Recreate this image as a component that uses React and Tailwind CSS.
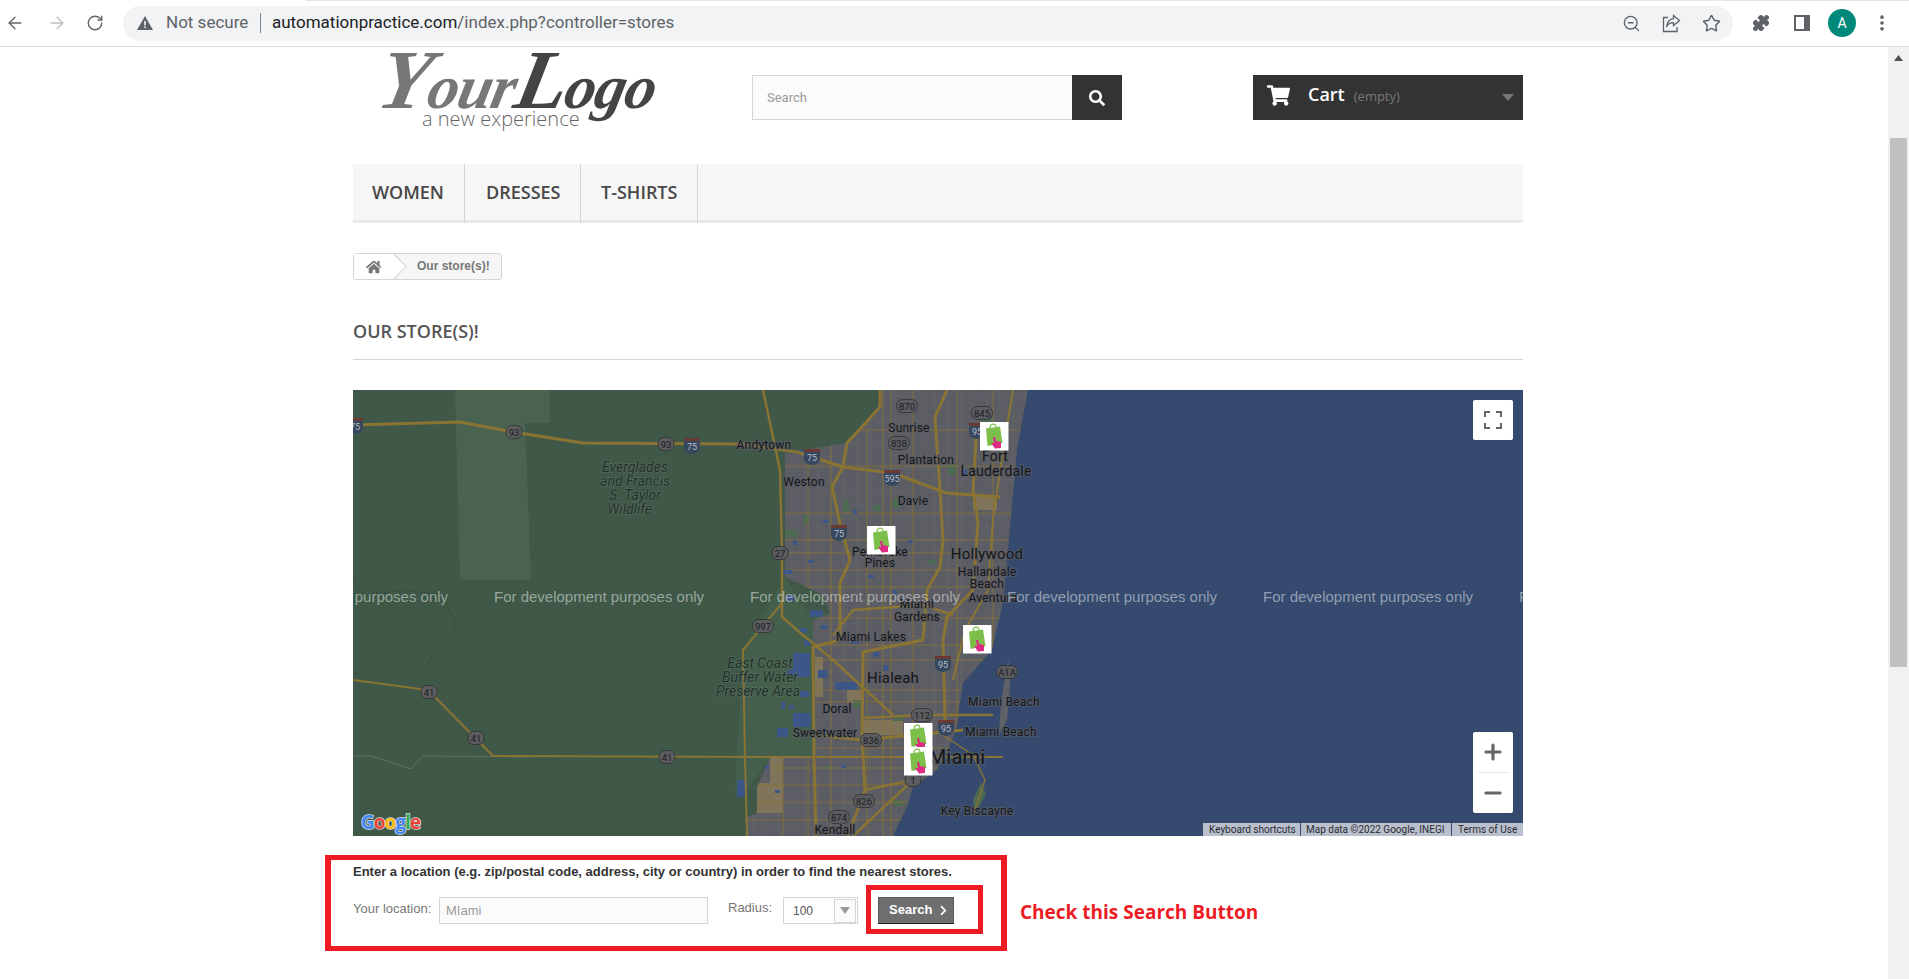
import { ArrowLeft, ArrowRight, RotateCw, ZoomOut, Star, Puzzle, EllipsisVertical, Plus, Minus } from "lucide-react";
import { FaHome, FaSearch, FaShoppingCart, FaChevronRight } from "react-icons/fa";

const GOLD = "#8a7433";

// map data, all in map pixels (1170 x 446)
const majorRoads = [
  ["0,35 107,32 160,42 230,53 387,54 444,62 490,77 540,83 593,103 647,107", 3],
  ["410,0 427,80 429,163 429,227 444,240 480,270 540,325", 2.4],
  ["429,213 390,260 392,367 394,446", 2],
  ["0,290 75,300 140,366 444,367 650,367", 2],
  ["527,0 527,17 494,53 490,77 479,97 487,133 497,170 487,193 487,250 460,257 461,367 463,446", 3],
  ["594,0 582,27 587,100 590,150 587,177 574,200 570,250 510,262 509,345 512,400 495,446", 3],
  ["624,33 620,100 625,133 620,200 594,227 590,250 592,327 590,345", 3],
  ["660,0 650,60 640,130 635,200 612,240 600,290", 2],
  ["460,345 510,350 560,345 610,340", 3],
  ["510,328 570,325 640,325", 2.4],
  ["590,345 620,365 632,390 620,425", 1.4],
  ["512,400 560,390 500,446", 2.4],
  ["480,245 500,220 570,215 600,225", 2.4],
];

const urban = "527,0 527,17 514,33 494,53 432,63 432,187 470,205 477,223 460,230 460,367 417,367 404,397 404,423 394,427 394,446 540,446 554,417 560,397 584,380 594,363 604,337 607,313 610,293 639,260 655,213 664,60 675,0";
const coast = "675,0 664,60 655,160 650,213 639,260 610,293 607,313 604,337 594,363 584,380 560,397 554,417 540,446 1170,446 1170,0";

const lakes = [
  [440, 263, 17, 24], [440, 323, 17, 14], [424, 338, 11, 9], [457, 220, 13, 7], [384, 390, 10, 17],
  [465, 280, 9, 8], [482, 292, 22, 8], [434, 280, 8, 6], [430, 180, 9, 4], [433, 205, 8, 6],
  [447, 301, 9, 6], [498, 250, 8, 4], [520, 262, 6, 5], [470, 130, 5, 3], [500, 120, 4, 4],
  [610, 80, 4, 5], [446, 60, 7, 3], [555, 150, 5, 3], [515, 185, 6, 3], [540, 200, 4, 4],
  [446, 238, 8, 5], [451, 250, 6, 6], [428, 312, 4, 7], [436, 315, 5, 4], [412, 376, 4, 3], [422, 400, 5, 3],
  [468, 235, 6, 4], [480, 240, 7, 4], [530, 275, 5, 6], [440, 150, 4, 5], [455, 170, 6, 3], [488, 375, 5, 3],
];
const tanPatches = [
  [462, 267, 8, 40], [494, 300, 15, 13], [510, 330, 40, 15], [417, 368, 13, 55], [404, 393, 13, 30], [620, 107, 24, 13],
];
const greenPatches = [
  [490, 110, 6, 12], [520, 115, 8, 6], [540, 108, 8, 10], [595, 75, 8, 9], [630, 25, 8, 7], [500, 310, 10, 8],
  [540, 325, 10, 6], [470, 376, 8, 3], [540, 410, 10, 6], [432, 140, 12, 8], [450, 125, 6, 9], [575, 170, 7, 4],
];

const labels = [
  ["Andytown", 411, 59, 12], ["Sunrise", 556, 42, 12], ["Plantation", 573, 74, 12], ["Weston", 451, 96, 12],
  ["Davie", 560, 115, 12], ["Pembroke", 527, 166, 12], ["Pines", 527, 177, 12], ["Hallandale", 634, 186, 12],
  ["Beach", 634, 198, 12], ["Aventura", 640, 212, 12], ["Miami", 564, 218, 12], ["Gardens", 564, 231, 12],
  ["Miami Lakes", 518, 251, 12], ["Doral", 484, 323, 12], ["Sweetwater", 472, 347, 12], ["Miami Beach", 651, 316, 12],
  ["Miami Beach", 648, 346, 12], ["Key Biscayne", 624, 425, 12], ["Kendall", 482, 444, 12],
  ["Fort", 642, 71, 14], ["Lauderdale", 643, 86, 14], ["Hollywood", 634, 169, 15], ["Hialeah", 540, 293, 15], ["Miami", 604, 374, 20],
];
const parkLabels = [
  ["Everglades", 282, 82], ["and Francis", 282, 96], ["S. Taylor", 282, 110], ["Wildlife...", 282, 124],
  ["East Coast", 407, 278], ["Buffer Water", 407, 292], ["Preserve Area", 405, 306],
];
const shields = [
  ["93", 161, 42], ["93", 313, 54], ["27", 427, 163], ["997", 410, 236], ["41", 76, 302], ["41", 123, 348], ["41", 314, 367],
  ["870", 554, 16], ["845", 629, 23], ["838", 546, 53], ["A1A", 654, 282], ["112", 569, 325], ["836", 518, 350],
  ["1", 560, 390], ["826", 511, 411], ["874", 486, 427],
];
const interstates = [["75", 2, 35], ["75", 339, 55], ["95", 624, 40], ["75", 459, 66], ["595", 539, 87], ["75", 486, 142], ["95", 590, 273], ["95", 593, 337]];
const markers = [[627, 32], [514, 136], [610, 235], [551, 333], [551, 357]];
const watermarks = [-115, 141, 397, 654, 910, 1166];

function Marker({ x, y }) {
  return (
    <g transform={`translate(${x} ${y})`}>
      <rect width="28.5" height="28.5" fill="#fff" />
      <path d="M6 6.5 L20 4.5 L22.5 21 L7.5 24 Z" fill="#7cc04b" />
      <path d="M10 6 C10 1 16 1 16 5" fill="none" stroke="#7cc04b" strokeWidth="1.2" />
      <path d="M13 15 L15 15 L16 19 L21 20 L21 26 L15 26.5 L11 21 L14 21 Z" fill="#dd2a82" />
    </g>
  );
}

function StoreMap() {
  const verticals = [];
  const horizontals = [];
  for (let x = 400; x < 680; x += 13) verticals.push(x);
  for (let y = 6; y < 446; y += 12) horizontals.push(y);
  const goldV = [455, 514, 538, 560, 604, 640, 430, 478, 530];
  const goldH = [40, 76, 123, 150, 163, 180, 197, 228, 255, 270, 300, 312, 358, 378, 395, 412, 430];

  return (
    <svg viewBox="0 0 1170 446" width="1170" height="446" className="block bg-[#405847]">
      <defs>
        <clipPath id="urban-clip"><polygon points={urban} /></clipPath>
      </defs>
      <polygon points="102,0 197,0 197,33 172,33 178,190 107,190" fill="#4a6351" />
      <polygon points="390,260 432,187 460,230 460,367 417,367 394,400 382,400" fill="#44604c" />
      <polygon points={urban} fill="#5c5d64" />
      <g clipPath="url(#urban-clip)">
        {verticals.map((x) => <line key={x} x1={x} y1="0" x2={x} y2="446" stroke="#66686d" strokeWidth="0.6" />)}
        {horizontals.map((y) => <line key={y} x1="390" y1={y} x2="680" y2={y} stroke="#66686d" strokeWidth="0.6" />)}
        {tanPatches.map(([x, y, w, h]) => <rect key={`${x}-${y}`} x={x} y={y} width={w} height={h} fill="#80745a" />)}
        {greenPatches.map(([x, y, w, h]) => <rect key={`${x}-${y}`} x={x} y={y} width={w} height={h} fill="#4d6a53" />)}
        {goldV.map((x) => <line key={x} x1={x} y1="0" x2={x} y2="446" stroke={GOLD} strokeWidth="1" strokeOpacity="0.8" />)}
        {goldH.map((y) => <line key={y} x1="390" y1={y} x2="680" y2={y} stroke={GOLD} strokeWidth="1" strokeOpacity="0.8" />)}
      </g>
      {lakes.map(([x, y, w, h]) => <rect key={`${x}-${y}`} x={x} y={y} width={w} height={h} fill="#3c5689" />)}
      <polygon points={coast} fill="#354a6e" />
      <polygon points="655,270 658,285 654,330 646,345 648,312" fill="#5f6168" />
      <polygon points="628,392 633,404 622,425 620,410" fill="#4d6a53" />

      {/* faint trail bits in the everglades */}
      <path d="M0 188 L12 205 L50 200 L90 205 L104 238 L80 265 L72 280" fill="none" stroke="#2e3f33" strokeWidth="0.8" strokeDasharray="2 2" />
      <path d="M0 366 L18 366 L58 379 L70 366 L180 367" fill="none" stroke="#6b7a6f" strokeWidth="0.8" />

      {majorRoads.map(([points, w]) => (
        <polyline key={points} points={points} fill="none" stroke={GOLD} strokeWidth={w} strokeLinejoin="round" />
      ))}

      {shields.map(([t, x, y]) => {
        const w = t.length > 2 ? 21 : 16;
        return (
          <g key={`${t}-${x}`}>
            <rect x={x - w / 2} y={y - 6.5} width={w} height="13" rx="6" fill="#5b5c60" stroke="#2a2a2c" strokeWidth="0.7" />
            <text x={x} y={y + 3.5} textAnchor="middle" fontSize="9.5" fontFamily="Roboto, sans-serif" fill="#1b1b1d">{t}</text>
          </g>
        );
      })}
      {interstates.map(([t, x, y]) => (
        <g key={`${t}-${x}`}>
          <path d={`M${x - 8} ${y - 6} H${x + 8} V${y + 2} Q${x + 8} ${y + 8} ${x} ${y + 9} Q${x - 8} ${y + 8} ${x - 8} ${y + 2} Z`} fill="#36485f" />
          <rect x={x - 8} y={y - 7} width="16" height="3" fill="#6a3a32" />
          <text x={x} y={y + 5} textAnchor="middle" fontSize="9" fontFamily="Roboto, sans-serif" fill="#b9bdc4">{t}</text>
        </g>
      ))}

      <g fontFamily="Roboto, sans-serif" textAnchor="middle">
        {labels.map(([t, x, y, size]) => (
          <text key={`${t}-${x}-${y}`} x={x} y={y} fontSize={size} letterSpacing="0.2" fill="#141518" stroke="#5a5c65" strokeOpacity="0.75" strokeWidth="2" paintOrder="stroke">{t}</text>
        ))}
        {parkLabels.map(([t, x, y]) => (
          <text key={t} x={x} y={y} fontSize="14" fontStyle="italic" fill="#23302a" stroke="#5c7263" strokeOpacity="0.7" strokeWidth="1.5" paintOrder="stroke">{t}</text>
        ))}
      </g>

      {watermarks.map((x) => (
        <text key={x} x={x} y="212" fontSize="15" fontFamily="Liberation Sans, sans-serif" fill="#fff" fillOpacity="0.47">For development purposes only</text>
      ))}

      {markers.map(([x, y]) => <Marker key={`${x}-${y}`} x={x} y={y} />)}

      <text x="8" y="439" fontSize="19" fontWeight="700" fontFamily="Open Sans, sans-serif" stroke="#d8dde0" strokeWidth="1.5" paintOrder="stroke" letterSpacing="-1">
        <tspan fill="#4285f4">G</tspan><tspan fill="#ea4335">o</tspan><tspan fill="#fbbc05">o</tspan><tspan fill="#4285f4">g</tspan><tspan fill="#34a853">l</tspan><tspan fill="#ea4335">e</tspan>
      </text>
    </svg>
  );
}

function BrowserBar() {
  return (
    <div className="relative h-[47px] shrink-0 flex items-center border-b border-[#dadce0] bg-white text-[#5f6368] font-['Roboto',sans-serif]">
      <div className="absolute top-0 left-[306px] right-0 h-px bg-[#e3e5e8]" />
      <ArrowLeft size={20} strokeWidth={1.6} className="ml-[5px]" />
      <ArrowRight size={20} strokeWidth={1.6} className="ml-[22px] text-[#bdc1c6]" />
      <RotateCw size={18} strokeWidth={1.8} className="ml-[19px]" />
      <div className="ml-[19px] w-[1610px] h-[35px] rounded-full bg-[#f1f3f4] flex items-center">
        <svg width="16" height="14" viewBox="0 0 16 14" className="ml-[14px] shrink-0">
          <path d="M8 0 L16 14 H0 Z" fill="#5f6368" />
          <rect x="7.2" y="5" width="1.6" height="4.5" fill="#f1f3f4" />
          <rect x="7.2" y="10.5" width="1.6" height="1.6" fill="#f1f3f4" />
        </svg>
        <span className="ml-[13px] text-[17px] w-[83px] whitespace-nowrap">Not secure</span>
        <span className="ml-[11px] h-[20px] w-px bg-[#80868b]" />
        <span className="ml-[11px] text-[17px] whitespace-nowrap">
          <span className="text-[#202124]">automationpractice.com</span>/index.php?controller=stores
        </span>
        <div className="ml-auto flex items-center">
          <ZoomOut size={19} strokeWidth={1.7} className="mr-[21px]" />
          <svg width="19" height="19" viewBox="0 0 19 19" fill="none" stroke="#5f6368" strokeWidth="1.3" className="mr-[21px]">
            <path d="M6 3.5H1.5V17.5H15V13" />
            <path d="M11.5 1.5 L17.5 6.5 L11.5 11.5 V8.7 C8 8.7 5.8 10 4.5 13 C5 8.5 7.5 5.3 11.5 4.6 Z" />
          </svg>
          <Star size={19} strokeWidth={1.8} className="mr-[12px]" />
        </div>
      </div>
      <Puzzle size={18} strokeWidth={1.5} fill="currentColor" className="ml-[19px]" />
      <svg width="16" height="16" viewBox="0 0 16 16" className="ml-[24px]">
        <rect width="16" height="16" fill="#5f6368" />
        <rect x="2" y="2" width="8" height="12" fill="#fff" />
      </svg>
      <div className="ml-[18px] w-[28px] h-[28px] rounded-full bg-[#00897b] text-white text-[14px] flex items-center justify-center">A</div>
      <EllipsisVertical size={20} strokeWidth={2.4} className="ml-[16px]" />
    </div>
  );
}

function Header() {
  return (
    <div className="flex h-[117px] items-start">
      <div className="w-[399px] pl-[16px] h-full relative">
        <div className="pt-[2px] font-['Liberation_Serif',serif] italic font-bold leading-[62px] whitespace-nowrap tracking-[-1px] -skew-x-12 origin-bottom">
          <span className="text-[#777] text-[84px]">Y</span>
          <span className="text-[#777] text-[62px]">our</span>
          <span className="text-[#444] text-[84px]">L</span>
          <span className="text-[#444] text-[62px]">ogo</span>
        </div>
        <div className="absolute left-[69px] top-[57px] font-['Open_Sans',sans-serif] font-light text-[20px] text-[#666] whitespace-nowrap">a new experience</div>
      </div>
      <div className="mt-[28px] w-[370px] h-[45px] flex">
        <div className="flex-1 bg-[#fbfbfb] border border-[#d6d4d4] border-r-0 flex items-center pl-[14px] font-['Roboto',sans-serif] text-[13px] text-[#9c9b9b]">Search</div>
        <div className="w-[50px] bg-[#333] flex items-center justify-center text-white"><FaSearch size={16} /></div>
      </div>
      <div className="mt-[28px] ml-auto w-[270px] h-[45px] bg-[#333] flex items-center font-['Open_Sans',sans-serif]">
        <FaShoppingCart size={23} className="ml-[14px] mb-[5px] text-white" />
        <span className="ml-[18px] mb-[6px] text-[18px] font-semibold text-white">Cart</span>
        <span className="ml-[9px] mb-[1px] text-[13px] text-[#777]">(empty)</span>
        <svg width="12" height="7" viewBox="0 0 12 7" className="ml-auto mr-[9px]"><path d="M0 0 H12 L6 7 Z" fill="#777" /></svg>
      </div>
    </div>
  );
}

function Nav() {
  return (
    <div className="h-[59px] bg-[#f6f6f6] border-b-[3px] border-[#e9e9e9] flex font-['Open_Sans',sans-serif] text-[18px] font-semibold text-[#484848]">
      <div className="w-[112px] h-[59px] pb-[2px] border-r border-[#d6d4d4] flex items-center pl-[19px]">WOMEN</div>
      <div className="w-[116px] h-[59px] pb-[2px] border-r border-[#d6d4d4] flex items-center pl-[21px]">DRESSES</div>
      <div className="w-[117px] h-[59px] pb-[2px] border-r border-[#d6d4d4] flex items-center pl-[20px]">T-SHIRTS</div>
    </div>
  );
}

function Breadcrumb() {
  return (
    <div className="mt-[30px] w-[149px] h-[27px] border border-[#d6d4d4] rounded-[3px] flex overflow-hidden bg-[#f6f6f6] font-['Liberation_Sans',sans-serif] font-bold text-[12px] text-[#777]">
      <div className="relative w-[40px] bg-white flex items-center pl-[12px]">
        <FaHome size={16} className="text-[#777]" />
        <div className="absolute right-[-9px] top-[3px] w-[19px] h-[19px] bg-white border-t border-r border-[#d6d4d4] rotate-45" />
      </div>
      <span className="ml-[23px] mb-[1px] self-center whitespace-nowrap">Our store(s)!</span>
    </div>
  );
}

function MapControls() {
  return (
    <>
      <div className="absolute top-[10px] right-[10px] w-[40px] h-[40px] bg-white rounded-[2px] flex items-center justify-center">
        <svg width="18" height="18" viewBox="0 0 18 18" fill="none" stroke="#666" strokeWidth="2">
          <path d="M1 6V1H6M12 1H17V6M17 12V17H12M6 17H1V12" />
        </svg>
      </div>
      <div className="absolute top-[342px] right-[10px] w-[40px] h-[81px] bg-white rounded-[2px] flex flex-col items-center text-[#666]">
        <div className="h-[40px] flex items-center justify-center"><Plus size={24} strokeWidth={3.2} /></div>
        <div className="w-[30px] h-px bg-[#e6e6e6]" />
        <div className="h-[40px] flex items-center justify-center"><Minus size={24} strokeWidth={3.2} /></div>
      </div>
      <div className="absolute bottom-0 right-0 h-[13px] w-[320px] flex bg-[#b9bfcc] text-[10px] leading-[13px] text-[#2a2c33] font-['Roboto',sans-serif] whitespace-nowrap">
        <span className="w-[98px] pl-[6px] border-r border-[#3a4a6a]">Keyboard shortcuts</span>
        <span className="w-[151px] pl-[5px] border-r border-[#3a4a6a]">Map data ©2022 Google, INEGI</span>
        <span className="pl-[6px]">Terms of Use</span>
      </div>
    </>
  );
}

function LocationForm() {
  return (
    <div className="flex items-start mt-[19px] ml-[-28px]">
      <div className="w-[682px] h-[96px] border-x-[6px] border-y-[5px] border-[#ed1c24] pl-[22px] font-['Liberation_Sans',sans-serif]">
        <p className="mt-[4px] text-[13px] font-bold leading-[15px] text-[#333] whitespace-nowrap">Enter a location (e.g. zip/postal code, address, city or country) in order to find the nearest stores.</p>
        <div className="flex items-start mt-[6px] text-[13px] text-[#777]">
          <span className="mt-[16px] w-[86px] leading-[15px] whitespace-nowrap">Your location:</span>
          <div className="mt-[12px] w-[269px] h-[27px] bg-[#fbfbfb] border border-[#d6d4d4] pl-[6px] flex items-center text-[#9c9b9b]">MIami</div>
          <span className="mt-[15px] ml-[20px] w-[55px] leading-[15px]">Radius:</span>
          <div className="mt-[12px] w-[75px] h-[27px] bg-white border border-[#d6d4d4] flex items-center pl-[9px] text-[12px] text-[#555]">
            100
            <span className="ml-auto mr-px w-[22px] h-[24px] border border-[#d6d4d4] bg-[#fbfbfb] flex items-center justify-center">
              <svg width="10" height="7" viewBox="0 0 10 7"><path d="M0 0 H10 L5 7 Z" fill="#999" /></svg>
            </span>
          </div>
          <div className="ml-[8px] w-[117px] h-[49px] border-[5px] border-[#ed1c24] pl-[7px] pt-[7px]">
            <div className="w-[76px] h-[27px] pl-[10px] pb-[1px] bg-[#6f6f6f] border border-[#5a5a5a] border-b-[#222] flex items-center gap-[6px] text-white font-bold">
              Search <FaChevronRight size={11} />
            </div>
          </div>
        </div>
      </div>
      <div className="ml-[13px] mt-[43px] font-['Open_Sans',sans-serif] font-bold text-[19px] leading-[28px] text-[#ed1c24] whitespace-nowrap">Check this Search Button</div>
    </div>
  );
}

export default function App() {
  return (
    <div className="h-screen overflow-hidden flex flex-col bg-white">
      <BrowserBar />
      <div className="flex-1 flex min-h-0">
        <main className="flex-1 min-w-0 overflow-hidden">
          <div className="w-[1170px] ml-[353px]">
            <Header />
            <Nav />
            <Breadcrumb />
            <h1 className="mt-[37px] h-[43px] border-b border-[#d6d4d4] font-['Open_Sans',sans-serif] text-[18px] font-semibold leading-[28px] text-[#555454]">OUR STORE(S)!</h1>
            <div className="relative mt-[30px] h-[446px]">
              <StoreMap />
              <MapControls />
            </div>
            <LocationForm />
          </div>
        </main>
        <div className="w-[21px] shrink-0 bg-[#f1f1f1] flex flex-col items-center pt-[8px]">
          <svg width="9" height="6" viewBox="0 0 9 6"><path d="M4.5 0 L9 6 H0 Z" fill="#505050" /></svg>
          <div className="mt-[77px] w-[17px] h-[529px] bg-[#c1c1c1]" />
        </div>
      </div>
    </div>
  );
}
